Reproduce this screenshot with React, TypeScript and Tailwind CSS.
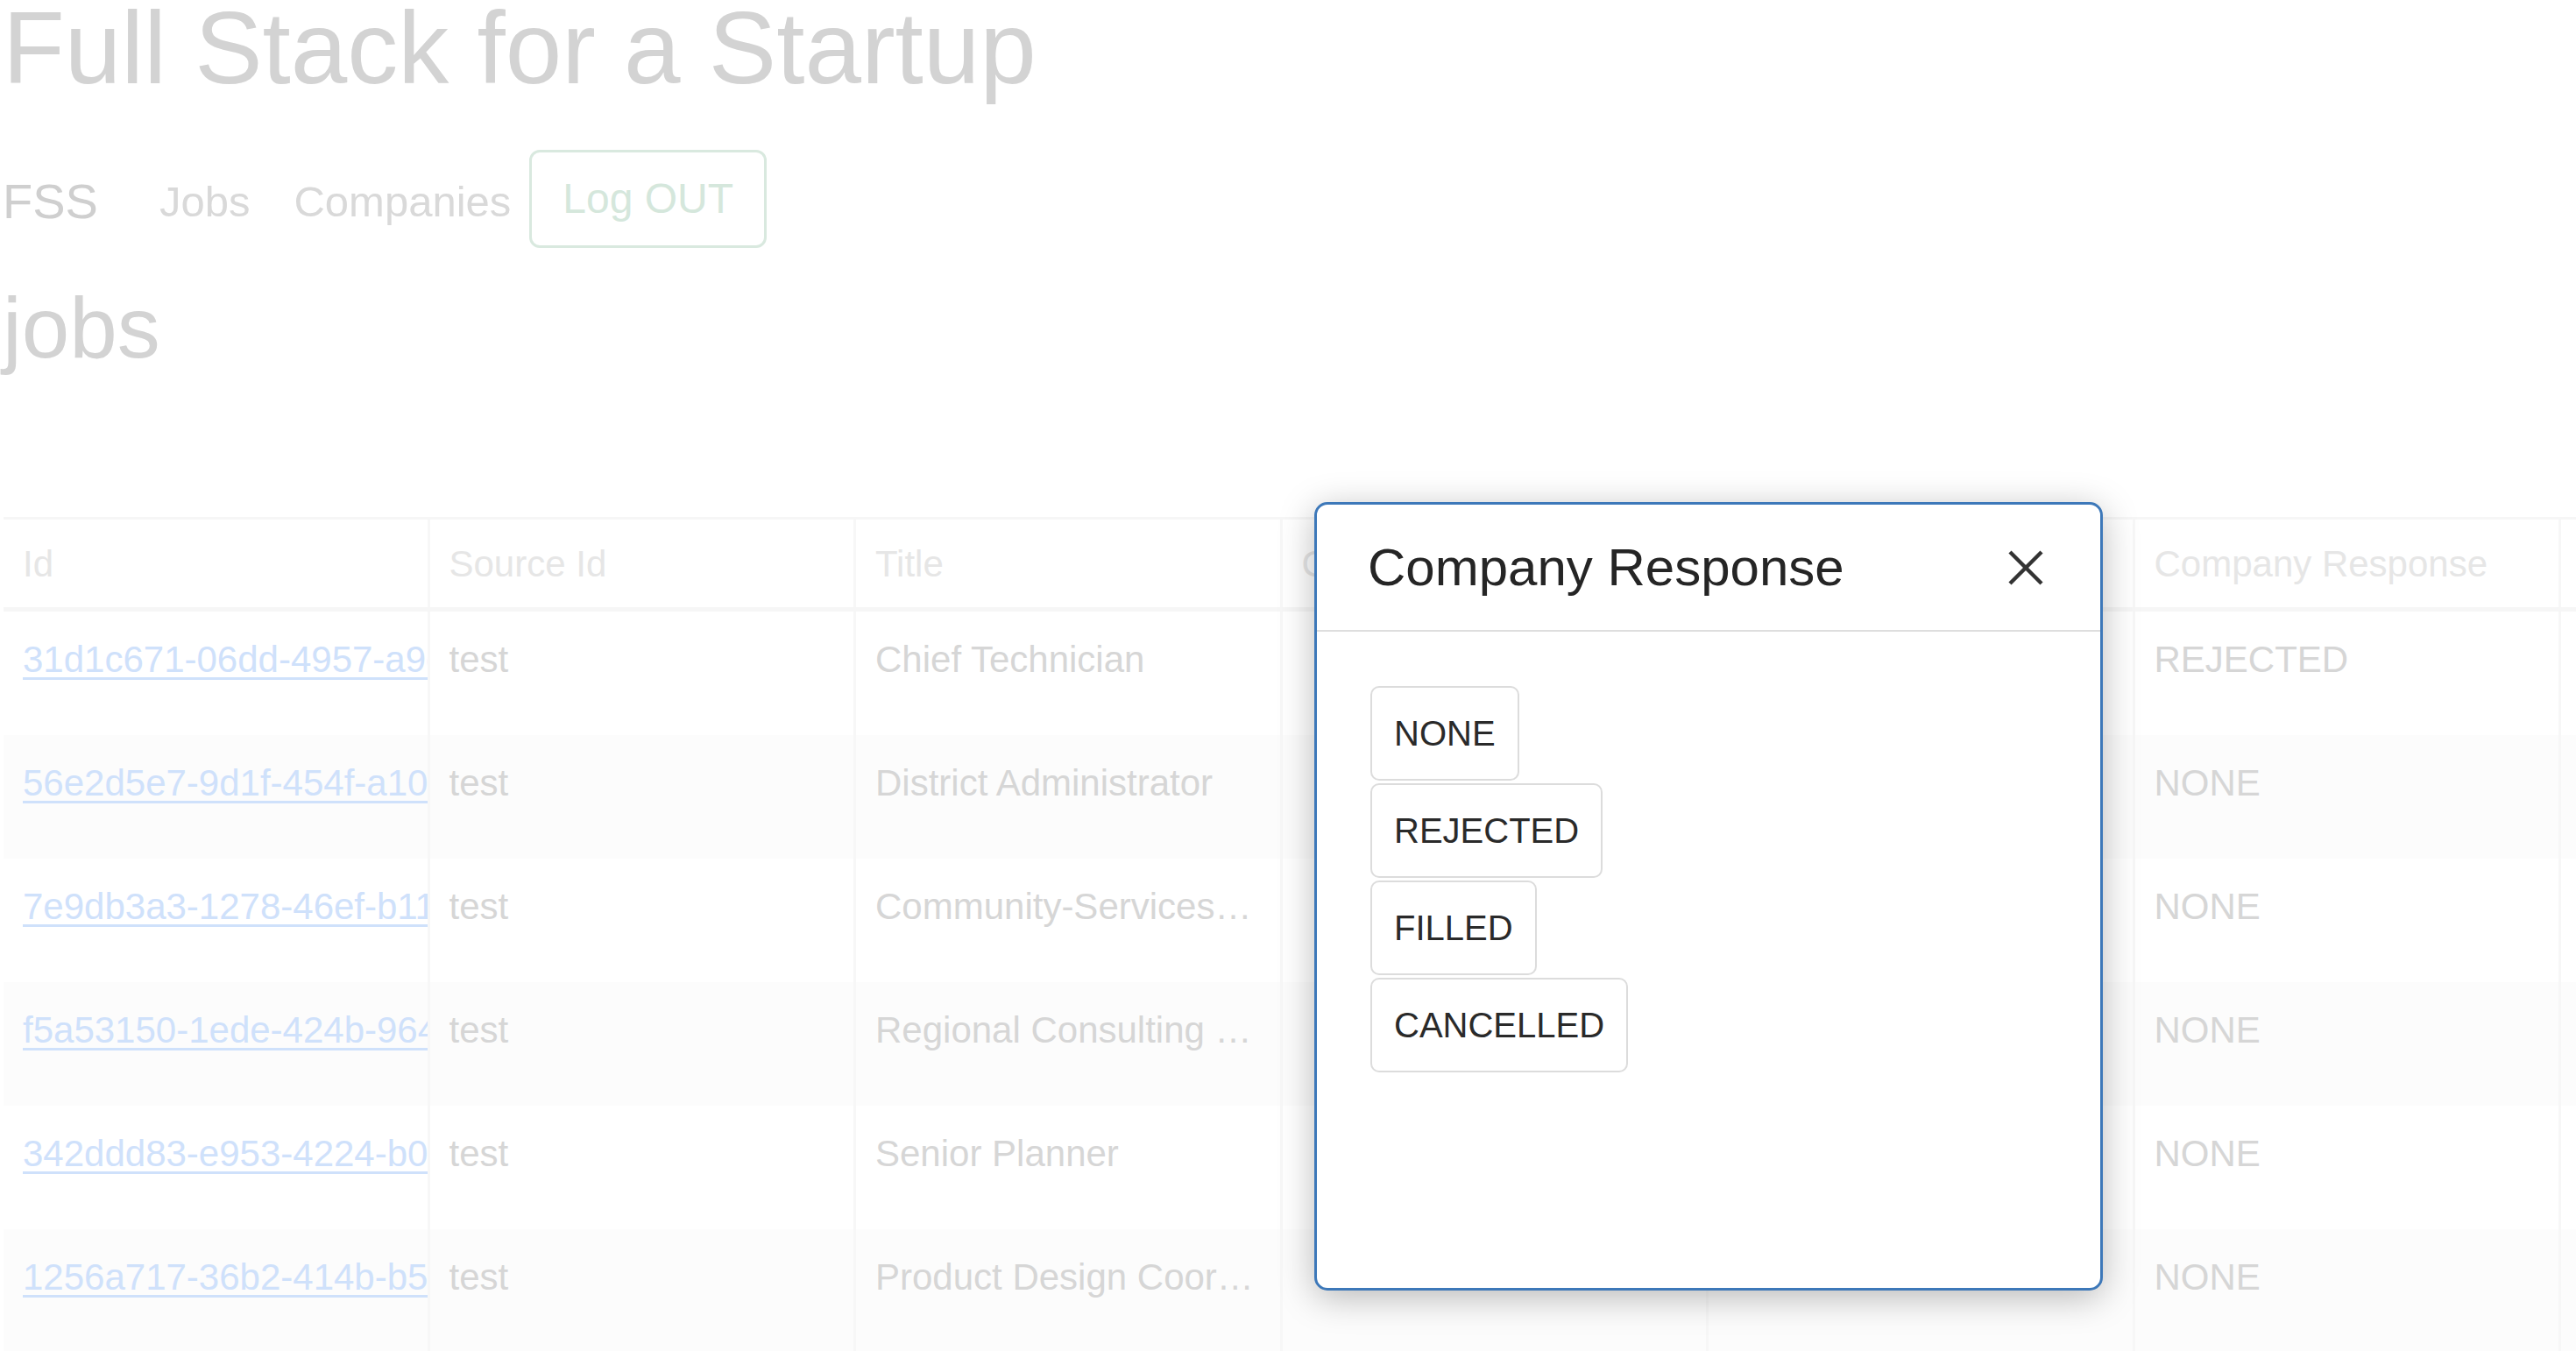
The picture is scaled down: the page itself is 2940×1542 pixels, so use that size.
import React from 'react'

type Job = {
  id: string
  sourceId: string
  title: string
  company: string
  recruiter: string
  response: string
  created: string
}

const JOBS: Job[] = [
  { id: '31d1c671-06dd-4957-a9c2-5b1e8f3d7a40', sourceId: 'test', title: 'Chief Technician', company: '', recruiter: '', response: 'REJECTED', created: '2023-04-02' },
  { id: '56e2d5e7-9d1f-454f-a10b-7c3e2a91f0d5', sourceId: 'test', title: 'District Administrator', company: '', recruiter: '', response: 'NONE', created: '2023-04-02' },
  { id: '7e9db3a3-1278-46ef-b11d-0a4c6e8b2f93', sourceId: 'test', title: 'Community-Services Liaison', company: '', recruiter: '', response: 'NONE', created: '2023-04-02' },
  { id: 'f5a53150-1ede-424b-964a-2d8f1b7c5e06', sourceId: 'test', title: 'Regional Consulting Officer', company: '', recruiter: '', response: 'NONE', created: '2023-04-02' },
  { id: '342ddd83-e953-4224-b0f7-9e1a3c5d7b28', sourceId: 'test', title: 'Senior Planner', company: '', recruiter: '', response: 'NONE', created: '2023-04-02' },
  { id: '1256a717-36b2-414b-b5c8-4f0e2d6a9b71', sourceId: 'test', title: 'Product Design Coordinator', company: '', recruiter: '', response: 'NONE', created: '2023-04-02' },
]

const COLUMNS = ['Id', 'Source Id', 'Title', 'Company', 'Recruiter', 'Company Response', 'Created At']

const RESPONSES = ['NONE', 'REJECTED', 'FILLED', 'CANCELLED']

function CloseIcon() {
  return (
    <svg width="40" height="40" viewBox="0 0 40 40" fill="none" stroke="#333333" strokeWidth="4.5">
      <path d="M2 2 38 38" />
      <path d="M38 2 2 38" />
    </svg>
  )
}

function ResponseModal() {
  return (
    <div className="absolute left-[1500px] top-[573px] flex h-[900px] w-[900px] flex-col rounded-[15px] border-[3px] border-[#3d78b9] bg-white shadow-[0_8px_40px_rgba(0,0,0,0.27)]">
      <div className="flex h-[145px] items-center justify-between border-b-2 border-[#dedede] pl-[58px] pr-[65px]">
        <h3 className="text-[60px] leading-[72px] text-[#252525]">Company Response</h3>
        <button className="flex h-[40px] w-[40px] items-center justify-center" aria-label="Close">
          <CloseIcon />
        </button>
      </div>
      <div className="flex flex-col items-start gap-[3px] pl-[61px] pt-[62px]">
        {RESPONSES.map(r => (
          <button
            key={r}
            className="rounded-[10px] border-2 border-[#dcdcdc] bg-white px-[25px] py-[22px] text-[40px] leading-[60px] text-[#2a2a2a]"
          >
            {r}
          </button>
        ))}
      </div>
    </div>
  )
}

function JobsTable() {
  return (
    <div className="ml-[4px] w-[3406px]">
      <div className="flex border-t-[3px] border-b-[5px] border-[#f6f6f6]">
        {COLUMNS.map(c => (
          <div
            key={c}
            className="flex h-[100px] w-[486.5px] shrink-0 items-center border-r-[3px] border-[#f7f7f7] pl-[22px] text-[42px] leading-[61px] text-[#e6e6e6]"
          >
            {c}
          </div>
        ))}
      </div>
      {JOBS.map((job, i) => {
        const cells = [job.sourceId, job.title, job.company, job.recruiter, job.response, job.created]
        return (
          <div key={job.id} className={`flex h-[141px] ${i % 2 === 1 ? 'bg-[#fcfcfc]' : 'bg-white'}`}>
            <div className="h-full w-[486.5px] shrink-0 overflow-hidden whitespace-nowrap border-r-[3px] border-[#f7f7f7] pl-[22px] pt-[24px] text-[42px] leading-[61px]">
              <a href="#" className="text-[#cfe1fb] underline decoration-[3px] underline-offset-[6px]">
                {job.id}
              </a>
            </div>
            {cells.map((v, j) => (
              <div
                key={j}
                className="h-full w-[486.5px] shrink-0 truncate border-r-[3px] border-[#f7f7f7] pl-[22px] pr-[23px] pt-[24px] text-[42px] leading-[61px] text-[#d6d6d6]"
              >
                {v}
              </div>
            ))}
          </div>
        )
      })}
    </div>
  )
}

export default function App() {
  return (
    <div className="relative h-[1542px] w-[2940px] overflow-hidden bg-white font-['Liberation_Sans',Arial,sans-serif]">
      <div className="pl-[3px]">
        <h1 className="text-[116px] font-normal leading-[110px] text-[#d3d3d3]">Full Stack for a Startup</h1>
        <nav className="mt-[61px] flex h-[112px] items-center">
          <span className="mt-[6px] text-[56px] leading-[80px] text-[#cfcfcf]">FSS</span>
          <a href="#" className="ml-[70px] mt-[6px] text-[49px] leading-[72px] text-[#d9d9d9]">Jobs</a>
          <a href="#" className="ml-[50px] mt-[6px] text-[49px] leading-[72px] text-[#d9d9d9]">Companies</a>
          <button className="ml-[21px] rounded-[12px] border-[3px] border-[#d9e9df] px-[35px] py-[17px] text-[48px] leading-[72px] text-[#d5e7dc]">
            Log OUT
          </button>
        </nav>
        <h2 className="mt-[34px] text-[98px] leading-[115px] text-[#d3d3d3]">jobs</h2>
      </div>
      <div className="mt-[158px]">
        <JobsTable />
      </div>
      <ResponseModal />
    </div>
  )
}
